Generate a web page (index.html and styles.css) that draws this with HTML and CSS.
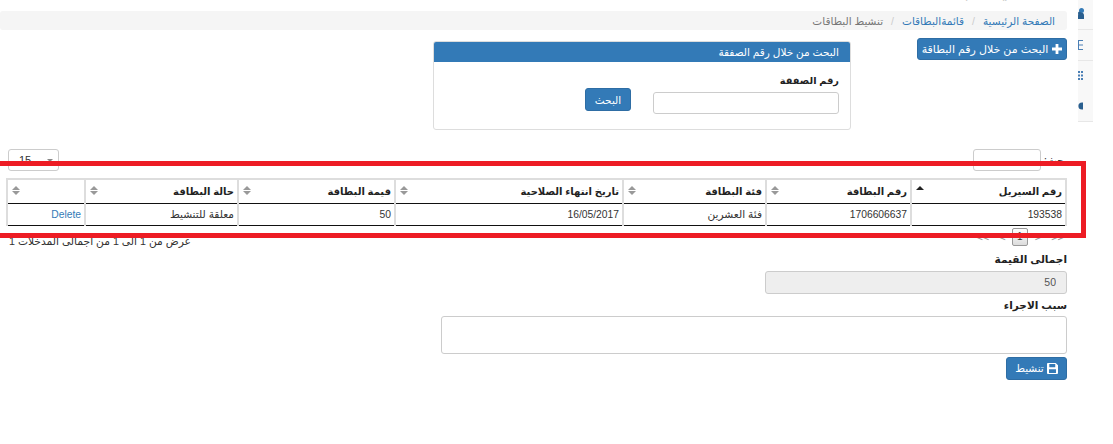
FILE: index.html
```html
<!DOCTYPE html>
<html lang="ar" dir="rtl">
<head>
<meta charset="utf-8">
<title>تنشيط البطاقات</title>
<link rel="stylesheet" href="styles.css">
</head>
<body>
<div class="viewport">
  <aside class="rail">
    <div class="rail-item rail-first"><svg width="6" height="11" viewBox="0 0 6 11"><circle cx="3.5" cy="2.5" r="2.5" fill="#337ab7"/><circle cx="1.5" cy="5" r="1.5" fill="#2a5f8f"/><path d="M0 7.5a3 3 0 0 1 6 0V11H0z" fill="#2a5f8f"/></svg></div>
    <div class="rail-item rail-second"><svg width="5" height="10" viewBox="0 0 5 10"><rect x=".5" y=".5" width="8" height="9" fill="none" stroke="#4a7fb5"/><path d="M0 5h5" stroke="#4a7fb5"/></svg></div>
    <div class="rail-item rail-third"><svg width="5" height="9" viewBox="0 0 5 9"><path d="M0 0h2v2H0zM3 0h2v2H3zM0 3.5h2v2H0zM3 3.5h2v2H3zM0 7h2v2H0zM3 7h2v2H3z" fill="#4a7fb5"/></svg><svg class="rail-gear" width="5" height="8" viewBox="0 0 5 8"><circle cx="4" cy="4" r="3.6" fill="#2a5f8f"/></svg></div>
  </aside>
  <main class="page">
    <p class="clipped-title"><span class="clipped-text">تنشيط البطاقات</span></p>
    <nav class="breadcrumb">
      <a href="#">الصفحة الرئيسية</a><span class="sep">/</span><a href="#">قائمةالبطاقات</a><span class="sep">/</span><span class="current">تنشيط البطاقات</span>
    </nav>
    <section class="search-row">
      <button class="btn btn-add"><svg class="plus" width="10" height="10" viewBox="0 0 10 10"><path d="M3.6 0h2.8v3.6H10v2.8H6.4V10H3.6V6.4H0V3.6h3.6z" fill="#fff"/></svg> البحث من خلال رقم البطاقة</button>
      <div class="panel">
        <div class="panel-head">البحث من خلال رقم الصفقة</div>
        <div class="panel-body">
          <div class="field">
            <label class="label label-deal">رقم الصفقة</label>
            <input class="input input-deal" type="text">
          </div>
          <button class="btn btn-search">البحث</button>
        </div>
      </div>
    </section>
    <section class="table-tools">
      <div class="table-search"><span class="search-label">بحث:</span><input class="input input-filter" type="text"></div>
      <div class="length-box"><span>15</span><i class="caret"></i></div>
    </section>
    <table class="grid">
      <colgroup><col class="c1"><col class="c2"><col class="c3"><col class="c4"><col class="c5"><col class="c6"><col class="c7"></colgroup>
      <thead>
        <tr>
          <th>رقم السيريل<i class="sort sort-up"></i></th>
          <th>رقم البطاقة<i class="sort"></i></th>
          <th>فئة البطاقة<i class="sort"></i></th>
          <th>تاريخ انتهاء الصلاحية<i class="sort"></i></th>
          <th>قيمة البطاقة<i class="sort"></i></th>
          <th>حالة البطاقة<i class="sort"></i></th>
          <th><i class="sort"></i></th>
        </tr>
      </thead>
      <tbody>
        <tr>
          <td class="num">193538</td>
          <td class="num">1706606637</td>
          <td class="small">فئة العشرين</td>
          <td class="num">16/05/2017</td>
          <td class="num">50</td>
          <td class="small">معلقة للتنشيط</td>
          <td class="num"><a href="#">Delete</a></td>
        </tr>
      </tbody>
    </table>
    <section class="table-foot">
      <div class="pager"><span class="pg">&lt;&lt;</span><span class="pg pg-near">&lt;</span><span class="pg-current">1</span><span class="pg">&gt;</span><span class="pg pg-far">&gt;&gt;</span></div>
      <div class="info">عرض من 1 الى 1 من اجمالى المدخلات 1</div>
    </section>
    <form class="form">
      <label class="label">اجمالى القيمة</label>
      <input class="input input-total" type="text" value="50" disabled>
      <label class="label label-reason">سبب الاجراء</label>
      <textarea class="input input-reason"></textarea>
      <button class="btn btn-save" type="button"><svg width="11" height="11" viewBox="0 0 12 12"><path d="M1 0h8.5L12 2.5V11a1 1 0 0 1-1 1H1a1 1 0 0 1-1-1V1a1 1 0 0 1 1-1zm1.5 1.2v3.4h6.5V1.2zm-.3 5.6v4h7.6v-4z" fill="#fff" fill-rule="evenodd"/></svg> تنشيط</button>
    </form>
  </main>
  <div class="annotation"></div>
</div>
</body>
</html>
```
FILE: styles.css
```css
* { box-sizing: border-box; }
html, body { margin: 0; padding: 0; background: #fff; }
body { font-family: "Liberation Sans", "DejaVu Sans", sans-serif; font-size: 10.5px; color: #333; }
a { color: #337ab7; text-decoration: none; }
.viewport { position: relative; width: 1113px; height: 444px; overflow: hidden; display: flex; align-items: flex-start; padding-right: 20px; }
.rail { width: 15px; height: 122px; background: #f8f8f8; flex: none; margin-left: 11px; border-bottom: 1px solid #e7e7e7; display: flex; flex-direction: column; }
.rail-item { border-bottom: 1px solid #e7e7e7; display: flex; flex-direction: column; align-items: flex-end; overflow: hidden; }
.rail-first { height: 30px; padding-top: 8px; }
.rail-second { height: 31px; padding-top: 10px; }
.rail-third { height: 60px; padding-top: 10px; border-bottom: 0; }
.rail-gear { margin-top: 22px; }
.page { width: 1067px; flex: none; }
.clipped-title { height: 11px; margin: 0; padding-right: 33px; overflow: hidden; line-height: 0; font-size: 18px; }
.clipped-text { display: block; margin-top: -8px; color: #333; }
.breadcrumb { height: 19px; background: #f5f5f5; border-radius: 3px; padding: 0 12px 0 0; display: flex; align-items: center; color: #777; }
.sep { color: #ccc; padding: 0 8px; }
.current { color: #777; }
.search-row { height: 119px; display: flex; align-items: flex-start; padding-top: 8px; }
.btn { font: inherit; color: #fff; background: #337ab7; border: 1px solid #2e6da4; border-radius: 3px; padding: 0; cursor: pointer; display: inline-flex; align-items: center; justify-content: center; gap: 3px; }
.btn-add { width: 150px; height: 22px; font-size: 11px; }
.plus { margin-left: 1px; }
.panel { width: 418px; height: 89px; margin-right: 66px; margin-top: 3px; border: 1px solid #ddd; border-radius: 3px; overflow: hidden; }
.panel-head { height: 20px; background: #337ab7; color: #fff; padding: 0 11px; line-height: 20px; }
.panel-body { display: flex; align-items: flex-start; padding: 8px 11px 0; }
.label { display: block; font-weight: bold; color: #222; line-height: 14px; }
.label-deal { font-size: 9.8px; }
.input { display: block; font: inherit; color: #555; background: #fff; border: 1px solid #ccc; border-radius: 3px; padding: 0 10px; }
.field { width: 186px; padding-top: 4px; }
.input-deal { width: 186px; height: 22px; margin-top: 4px; }
.btn-search { width: 46px; height: 23px; margin-right: 22px; margin-top: 18px; }
.table-tools { height: 29px; padding-left: 8px; display: flex; justify-content: space-between; align-items: flex-start; }
.table-search { display: flex; align-items: center; height: 22px; gap: 2px; }
.search-label { width: 24px; white-space: nowrap; }
.input-filter { width: 68px; height: 22px; }
.length-box { width: 51px; height: 22px; border: 1px solid #ccc; border-radius: 3px; display: flex; flex-direction: row-reverse; align-items: center; justify-content: space-between; padding: 0 5px 0 10px; font-size: 11px; }
.caret { width: 0; height: 0; border: 3px solid transparent; border-top-color: #888; margin-top: 3px; }
.grid { table-layout: fixed; width: 1059px; border-collapse: collapse; border: 2px solid #ddd; border-bottom: 1px solid #111; }
.c1 { width: 155px; } .c2 { width: 145px; } .c3 { width: 143px; } .c4 { width: 228px; } .c5 { width: 157px; } .c6 { width: 153px; } .c7 { width: 78px; }
.grid th { position: relative; height: 24px; padding: 0 3px 0 18px; font-size: 10px; font-weight: bold; text-align: right; color: #222; border-left: 2px solid #ddd; border-bottom: 1px solid #111; white-space: nowrap; }
.grid td { height: 22px; padding: 0 3px; text-align: right; border-left: 2px solid #ddd; color: #333; }
.grid td.num { font-size: 10.3px; }
.grid td.small { font-size: 10.6px; }
.sort { position: absolute; left: 4px; top: 6px; width: 8px; height: 10px; }
.sort::before, .sort::after { content: ""; position: absolute; left: 0; width: 0; height: 0; border: 4px solid transparent; }
.sort::before { top: -4px; border-bottom-color: #999; }
.sort::after { top: 5px; border-top-color: #999; }
.sort-up::before { border-bottom-color: #222; }
.sort-up::after { display: none; }
.table-foot { height: 23px; margin-top: 1px; display: flex; justify-content: space-between; align-items: flex-start; }
.pager { direction: ltr; display: flex; gap: 7px; align-items: flex-start; color: #999; padding-right: 3px; font-size: 11px; }
.pg { line-height: 20px; }
.pg-near { margin-left: 3px; margin-right: -1px; }
.pg-far { margin-left: 3px; }
.pg-current { width: 16px; height: 18px; border: 1px solid #999; background: linear-gradient(#fff, #dcdcdc); color: #333; text-align: center; border-radius: 2px; line-height: 16px; margin-top: 1px; font-size: 10px; }
.info { padding: 8px 0 0 9px; color: #333; font-size: 10.7px; }
.form { display: flex; flex-direction: column; align-items: flex-start; margin-top: 2px; }
.input-total { width: 302px; height: 23px; margin-top: 5px; background: #eee; }
.label-reason { margin-top: 4px; }
.input-reason { width: 626px; height: 38px; margin-top: 4px; resize: none; }
.btn-save { width: 61px; height: 23px; margin-top: 3px; }
.annotation { position: absolute; left: 0; top: 161px; width: 1086px; height: 77px; border: 5px solid #ed1c24; border-left: 0; pointer-events: none; }
```
